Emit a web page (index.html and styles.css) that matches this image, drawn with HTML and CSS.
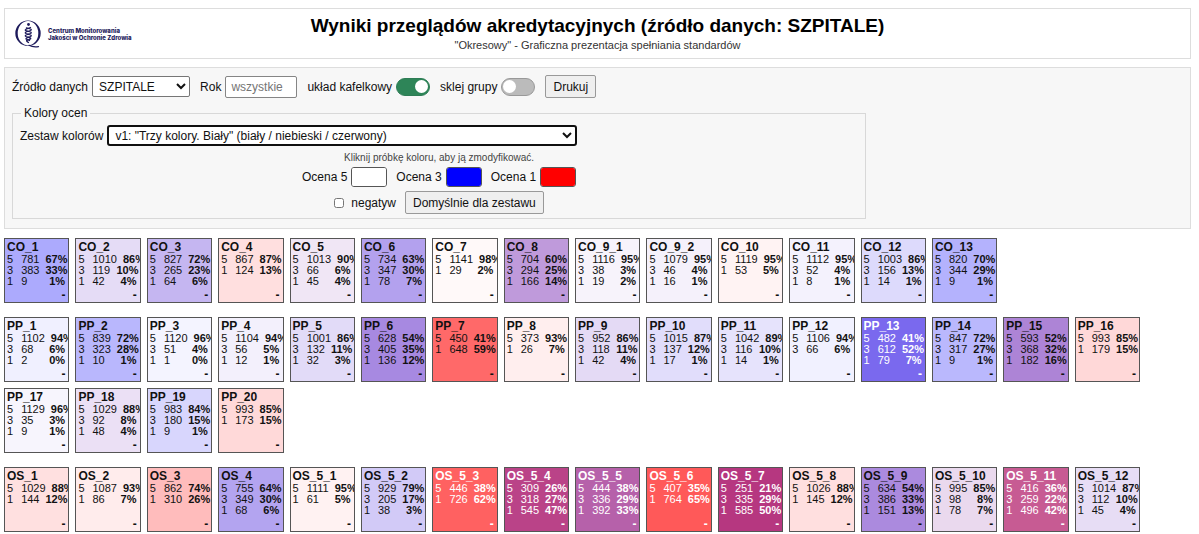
FILE: index.html
```html
<!DOCTYPE html>
<html lang="pl">
<head>
<meta charset="utf-8">
<meta name="viewport" content="width=device-width, initial-scale=1">
<title>Wyniki przeglądów akredytacyjnych</title>
<link rel="stylesheet" href="styles.css">
</head>
<body>
<header class="page-header">
  <div class="brand">
    <svg class="brand-mark" viewBox="0 0 28 28" aria-hidden="true">
      <path fill="#1d1a5b" fill-rule="evenodd" d="M13 0.500A12.700 12.700 0 0 1 13 25.900A12.700 12.700 0 0 1 13 0.500ZM13 1A10.300 12.200 0 0 0 13 25.400A10.300 12.200 0 0 0 13 1Z"/>
      <path fill="none" stroke="#1d1a5b" stroke-width="1.200" stroke-linecap="round" d="M14 25.300Q18 27.500 23.500 26.600"/>
      <circle cx="13.500" cy="4.500" r="1.400" fill="#1d1a5b"/>
      <path fill="none" stroke="#1d1a5b" stroke-width="1.300" stroke-linecap="round" stroke-linejoin="round" d="M15.500 7.500L11 9.200Q9.500 10 11 10.700L15.500 12Q17 12.700 15.500 13.500L11 15Q9.500 15.800 11 16.500L15 17.800Q16.500 18.500 15 19.200L12 20.300Q11 21 12.200 21.600L13.500 22.500M11.500 7.800L15.500 9Q17 9.700 15.500 10.500L11 12Q9.500 12.800 11 13.500L15.500 15Q17 15.700 15.500 16.500L11.500 18Q10.500 18.700 11.500 19.200L14.500 20.500"/>
    </svg>
    <span class="brand-name">Centrum Monitorowania<br>Jakości w Ochronie Zdrowia</span>
  </div>
  <div class="heading">
    <h1>Wyniki przeglądów akredytacyjnych (źródło danych: SZPITALE)</h1>
    <p>"Okresowy" - Graficzna prezentacja spełniania standardów</p>
  </div>
</header>

<form class="panel">
  <div class="toolbar">
    <label class="field">Źródło danych
      <select class="source"><option>SZPITALE</option></select>
    </label>
    <label class="field">Rok
      <input class="year" type="text" placeholder="wszystkie">
    </label>
    <label class="field">układ kafelkowy <input class="switch" type="checkbox" role="switch" checked></label>
    <label class="field">sklej grupy <input class="switch" type="checkbox" role="switch"></label>
    <button class="btn" type="button">Drukuj</button>
  </div>
  <fieldset class="colors">
    <legend>Kolory ocen</legend>
    <label class="field">Zestaw kolorów
      <select class="scheme"><option>v1: "Trzy kolory. Biały" (biały / niebieski / czerwony)</option></select>
    </label>
    <p class="hint">Kliknij próbkę koloru, aby ją zmodyfikować.</p>
    <div class="swatches">
      <label class="field">Ocena 5 <input class="swatch" type="color" value="#ffffff"></label>
      <label class="field">Ocena 3 <input class="swatch" type="color" value="#0000ff"></label>
      <label class="field">Ocena 1 <input class="swatch" type="color" value="#ff0000"></label>
    </div>
    <div class="actions">
      <label class="field negative"><input class="tick" type="checkbox"> negatyw</label>
      <button class="btn" type="button">Domyślnie dla zestawu</button>
    </div>
  </fieldset>
</form>

<main class="groups" id="groups"></main>
<script src="tiles.js"></script>
</body>
</html>
```
FILE: styles.css
```css
* { box-sizing: border-box; }

body {
  margin: 8px 8px 0 4px;
  font-family: "Liberation Sans", Arial, sans-serif;
  font-size: 12px;
  line-height: 14px;
  color: #111;
  background: #fff;
}

input, select, button { font: inherit; color: inherit; margin: 0; }

.page-header {
  display: grid;
  grid-template-columns: 1fr auto 1fr;
  align-items: center;
  min-height: 51px;
  padding: 0 10px;
  border: 1px solid #ddd;
}
.brand { display: flex; align-items: center; gap: 5px; }
.brand-mark { width: 28px; height: 28px; }
.brand-name {
  font-size: 6px;
  line-height: 7px;
  font-weight: 800;
  font-family: Inter, "Liberation Sans", sans-serif;
  color: #1d1a5b;
}
.heading { text-align: center; }
.heading h1 { margin: 0; font-size: 19px; line-height: 24px; color: #000; }
.heading p { margin: 0; padding-bottom: 2px; font-size: 11px; line-height: 14px; color: #333; }

.panel {
  margin-top: 8px;
  padding: 7px 8px 9px 7px;
  border: 1px solid #ddd;
  background: #f7f7f7;
}
.toolbar { display: flex; flex-wrap: wrap; align-items: center; gap: 10px; }
.field { display: inline-flex; align-items: center; gap: 4px; white-space: nowrap; }

.source, .scheme { height: 21px; padding: 0 2px; border: 1px solid #767676; border-radius: 2px; background: #fff; }
.source { width: 98px; }
.scheme { width: 470px; border: 2px solid #101010; border-radius: 3px; }
.year { width: 72px; height: 22px; padding: 0 5px; border: 1px solid #858585; border-radius: 2px; background: #fff; }
.year::placeholder { color: #757575; }

.switch {
  appearance: none;
  display: flex;
  align-items: center;
  width: 34px;
  height: 18px;
  padding: 1px;
  border: 1px solid #999;
  border-radius: 9px;
  background: #bbb;
}
.switch::before { content: ""; width: 13px; height: 13px; border-radius: 50%; background: #fff; }
.switch:checked { justify-content: flex-end; border-color: #2e7d55; background: #2e8558; }

.btn {
  height: 23px;
  padding: 0 7px;
  border: 1px solid #999;
  border-radius: 2px;
  background: #efefef;
}

.colors { width: 73%; margin: 8px 0 0; padding: 5px 7px 4px; border: 1px solid #d8d8d8; }
.colors legend { padding: 0 3px; margin-left: 1px; }
.hint { margin: 5px 0 2px; font-size: 10px; text-align: center; color: #444; }
.swatches, .actions { display: flex; justify-content: center; align-items: center; gap: 9px; }
.actions { margin-top: 4px; }
.swatch {
  appearance: none;
  width: 36px;
  height: 20px;
  padding: 0;
  border: 1px solid #555;
  border-radius: 3px;
  overflow: hidden;
}
.swatch::-webkit-color-swatch-wrapper { padding: 0; }
.swatch::-webkit-color-swatch { border: 0; }
.tick { width: 10px; height: 10px; }
.negative { gap: 7px; }

.groups { display: flex; flex-direction: column; gap: 14px; padding: 9px 51px 0 0; }
.group { display: grid; grid-template-columns: repeat(auto-fill, minmax(65px, 1fr)); gap: 6px; }
.tile {
  display: flex;
  flex-direction: column;
  min-width: 0;
  height: 65px;
  padding: 1px 0 0 2px;
  border: 1px solid #555;
  overflow: hidden;
}
.tile.dark { color: #fff; }
.tile h2 { margin: 0; font-size: 12px; line-height: 14px; }
.scores { display: block; border-spacing: 0; font-size: 11px; line-height: 11px; }
.scores tbody { display: block; }
.scores tr { display: flex; }
.scores th, .scores td { padding: 0; text-align: left; font-weight: 400; flex: none; }
.scores .count { min-width: 18px; margin: 0 6px 0 8px; }
.scores .share { min-width: 20px; text-align: right; font-weight: 700; }
.note { margin: auto 3px 0 0; font-weight: 700; line-height: 14px; text-align: right; }
```
FILE: tiles.js
```js
// [name, count of grade 5, grade 3, grade 1]
const groups = [
  [["CO_1",781,383,9],["CO_2",1010,119,42],["CO_3",827,265,64],["CO_4",867,0,124],["CO_5",1013,66,45],["CO_6",734,347,78],["CO_7",1141,0,29],["CO_8",704,294,166],["CO_9_1",1116,38,19],["CO_9_2",1079,46,16],["CO_10",1119,0,53],["CO_11",1112,52,8],["CO_12",1003,156,14],["CO_13",820,344,9]],
  [["PP_1",1102,68,2],["PP_2",839,323,10],["PP_3",1120,51,1],["PP_4",1104,56,12],["PP_5",1001,132,32],["PP_6",628,405,136],["PP_7",450,0,648],["PP_8",373,0,26],["PP_9",952,118,42],["PP_10",1015,137,17],["PP_11",1042,116,14],["PP_12",1106,66,0],["PP_13",482,612,79],["PP_14",847,317,9],["PP_15",593,368,182],["PP_16",993,0,179],["PP_17",1129,35,9],["PP_18",1029,92,48],["PP_19",983,180,9],["PP_20",993,0,173]],
  [["OS_1",1029,0,144],["OS_2",1087,0,86],["OS_3",862,0,310],["OS_4",755,349,68],["OS_5_1",1111,0,61],["OS_5_2",929,205,38],["OS_5_3",446,0,726],["OS_5_4",309,318,545],["OS_5_5",444,336,392],["OS_5_6",407,0,764],["OS_5_7",251,335,585],["OS_5_8",1026,0,145],["OS_5_9",634,386,151],["OS_5_10",995,98,78],["OS_5_11",416,259,496],["OS_5_12",1014,112,45]]
];
const grades = [5, 3, 1];
const palette = [[255, 255, 255], [0, 0, 255], [255, 0, 0]];

// Each tile is the palette mixed in proportion to its grade counts.
function tile([name, ...counts]) {
  const total = counts.reduce((a, b) => a + b, 0);
  const rgb = [0, 1, 2].map(c => Math.round(counts.reduce((sum, n, i) => sum + n * palette[i][c], 0) / total));
  const luma = 0.299 * rgb[0] + 0.587 * rgb[1] + 0.114 * rgb[2];
  const rows = counts.map((n, i) => n
    ? `<tr><th scope="row">${grades[i]}</th><td class="count">${n}</td><td class="share">${Math.round(n / total * 100)}%</td></tr>`
    : "").join("");
  return `<article class="tile${luma < 147 ? " dark" : ""}" style="background-color: rgb(${rgb})">
    <h2>${name}</h2><table class="scores"><tbody>${rows}</tbody></table><p class="note">-</p></article>`;
}

document.getElementById("groups").innerHTML =
  groups.map(g => `<section class="group">${g.map(tile).join("")}</section>`).join("");
```
